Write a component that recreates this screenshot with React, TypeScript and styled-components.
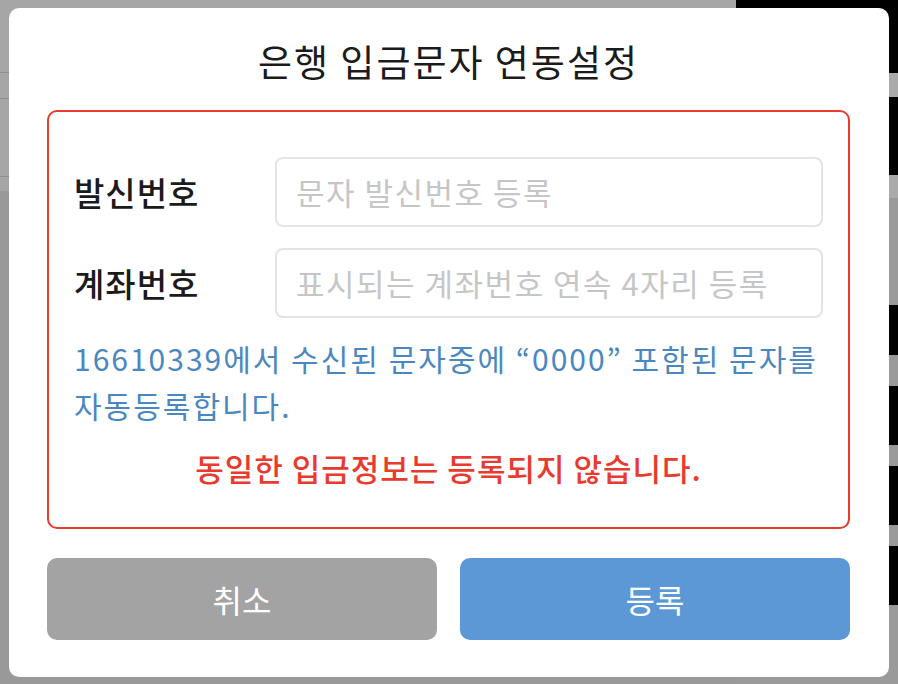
import React from 'react'
import styled, { createGlobalStyle } from 'styled-components'

type ButtonProps = {
  $tone: 'cancel' | 'submit'
}

type BlockProps = {
  $h: number
  $dark?: boolean
}

const GlobalStyle = createGlobalStyle`
  html, body {
    margin: 0;
    padding: 0;
    height: 100%;
    overflow: hidden;
  }
  body {
    font-family: 'Noto Sans CJK KR', 'Noto Sans', sans-serif;
  }
  #root {
    height: 100%;
  }
`

const App = () => {
  return (
    <>
      <GlobalStyle />
      <Page>
        <MainArea>
          <Header>
            <HeaderRow $h={72} />
            <HeaderRow $h={25} />
            <HeaderRow $h={77} />
          </Header>
          <PageBody />
        </MainArea>
        <SideColumn>
          <SideBlock $h={73} $dark />
          <SideBlock $h={24} />
          <SideBlock $h={78} $dark />
          <SideBlock $h={23} />
          <SideSpacer $h={107} />
          <SideBlock $h={50} $dark />
          <SideSpacer $h={31} />
          <SideBlock $h={59} $dark />
          <SideSpacer $h={21} />
          <SideBlock $h={59} $dark />
          <SideSpacer $h={21} />
          <SideBlock $h={59} $dark />
        </SideColumn>
      </Page>

      <Overlay>
        <Modal>
          <Title>은행 입금문자 연동설정</Title>
          <FormBox>
            <Field>
              <Label>발신번호</Label>
              <TextInput placeholder="문자 발신번호 등록" />
            </Field>
            <Field>
              <Label>계좌번호</Label>
              <TextInput placeholder="표시되는 계좌번호 연속 4자리 등록" />
            </Field>
            <Notice>
              16610339에서 수신된 문자중에 “0000” 포함된 문자를
              <br />
              자동등록합니다.
            </Notice>
            <Warning>동일한 입금정보는 등록되지 않습니다.</Warning>
          </FormBox>
          <Actions>
            <ActionButton $tone="cancel">취소</ActionButton>
            <ActionButton $tone="submit">등록</ActionButton>
          </Actions>
        </Modal>
      </Overlay>
    </>
  )
}

export default App

const Page = styled.div`
  display: flex;
  flex-direction: row;
  height: 100vh;
  background: #9a9a9a;
`

const MainArea = styled.div`
  flex: 1;
  display: flex;
  flex-direction: column;
`

const Header = styled.div`
  display: flex;
  flex-direction: column;
  background: #a6a6a6;
  padding-bottom: 14px;
`

const HeaderRow = styled.div<BlockProps>`
  height: ${(p) => p.$h}px;
  border-bottom: 1px solid #8f8f8f;
`

const PageBody = styled.div`
  flex: 1;
  background: #999999;
`

const SideColumn = styled.div`
  width: 162px;
  display: flex;
  flex-direction: column;
  background: #9a9a9a;
`

const SideBlock = styled.div<BlockProps>`
  height: ${(p) => p.$h}px;
  flex-shrink: 0;
  background: ${(p) => (p.$dark ? '#000000' : '#aaaaaa')};
`

const SideSpacer = styled.div<BlockProps>`
  height: ${(p) => p.$h}px;
  flex-shrink: 0;
`

const Overlay = styled.div`
  position: fixed;
  inset: 0;
  display: flex;
  align-items: center;
  justify-content: center;
`

const Modal = styled.div`
  width: 880px;
  height: 669px;
  box-sizing: border-box;
  background: #ffffff;
  border-radius: 10px;
  padding: 28px 39px 37px 38px;
  display: flex;
  flex-direction: column;
`

const Title = styled.h1`
  margin: 0 0 24px;
  height: 50px;
  line-height: 50px;
  text-align: center;
  font-size: 37px;
  font-weight: 400;
  color: #1b1b1b;
  letter-spacing: 2px;
`

const FormBox = styled.div`
  border: 2px solid #e93a2e;
  border-radius: 10px;
  height: 419px;
  box-sizing: border-box;
  padding: 45px 25px 0 25px;
  display: flex;
  flex-direction: column;
  gap: 21px;
`

const Field = styled.div`
  display: flex;
  flex-direction: row;
  align-items: center;
`

const Label = styled.div`
  width: 201px;
  flex-shrink: 0;
  font-size: 33px;
  font-weight: 500;
  letter-spacing: 1px;
  color: #1b1b1b;
`

const TextInput = styled.input`
  flex: 1;
  height: 70px;
  box-sizing: border-box;
  border: 2px solid #e4e4e4;
  border-radius: 8px;
  padding: 0 19px;
  font-family: 'Noto Sans CJK KR', 'Noto Sans', sans-serif;
  font-size: 31px;
  letter-spacing: 1.5px;
  color: #333333;
  outline: none;
  &::placeholder {
    color: #c6c6c6;
  }
`

const Notice = styled.p`
  margin: -4px 0 0;
  font-size: 30px;
  line-height: 47px;
  letter-spacing: 2px;
  color: #4a87c1;
  white-space: nowrap;
`

const Warning = styled.p`
  margin: -6px 0 0;
  font-size: 31px;
  line-height: 47px;
  font-weight: 500;
  letter-spacing: 1px;
  text-align: center;
  color: #e93a2e;
`

const Actions = styled.div`
  margin-top: 29px;
  display: grid;
  grid-template-columns: 1fr 1fr;
  gap: 23px;
`

const ActionButton = styled.button<ButtonProps>`
  height: 82px;
  border: none;
  border-radius: 10px;
  font-family: 'Noto Sans CJK KR', 'Noto Sans', sans-serif;
  font-size: 32px;
  font-weight: 400;
  color: #ffffff;
  background: ${(p) => (p.$tone === 'cancel' ? '#a3a3a3' : '#5b98d5')};
  cursor: pointer;
`
